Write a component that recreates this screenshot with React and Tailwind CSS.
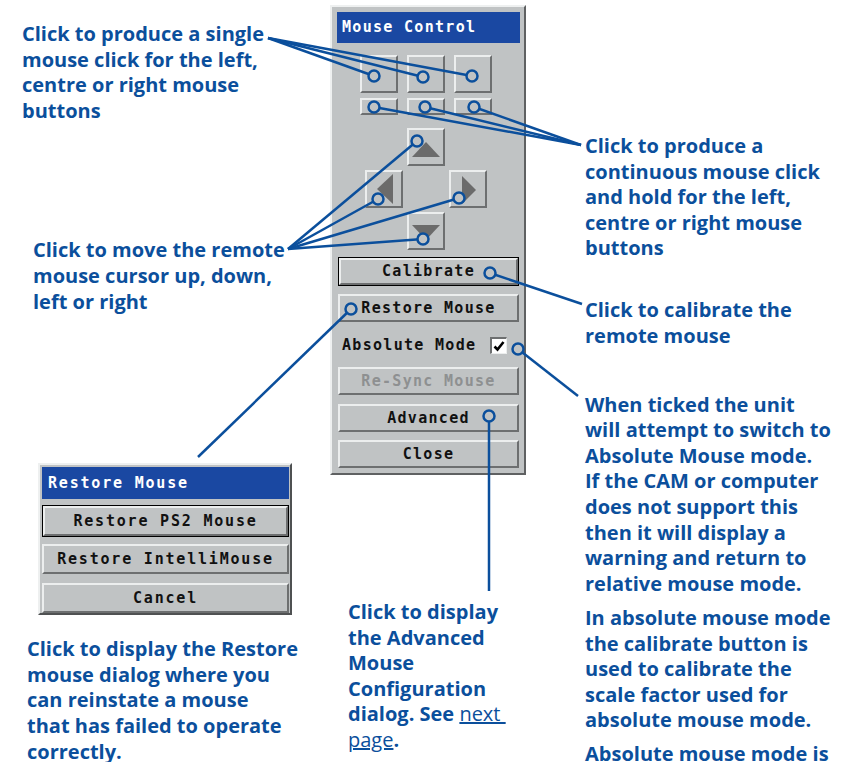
import React from "react";

const mono = "font-['DejaVu_Sans_Mono',monospace] font-bold";

function Btn({ children, className = "", focused, disabled }) {
  const face = (
    <div className="h-full border-2 border-t-[#eceeee] border-l-[#eceeee] border-b-[#6d6f70] border-r-[#6d6f70] bg-[#c0c3c4] flex items-center justify-center">
      <span className={disabled ? "text-[#8e9091]" : "text-[#111]"}>{children}</span>
    </div>
  );
  if (focused) {
    return <div className={`border border-black ${className}`}>{face}</div>;
  }
  return <div className={className}>{face}</div>;
}

function Square({ className = "", children }) {
  return (
    <div className={`border-2 border-t-[#eceeee] border-l-[#eceeee] border-b-[#6d6f70] border-r-[#6d6f70] bg-[#c0c3c4] flex items-center justify-center ${className}`}>
      {children}
    </div>
  );
}

function MousePanel() {
  return (
    <div className={`w-[196px] mt-[5px] border-2 border-t-[#eef0f0] border-l-[#eef0f0] border-b-[#5f6162] border-r-[#5f6162] bg-[#c0c3c4] pl-[5px] pr-[4px] pt-[5px] pb-[5px] flex flex-col text-[15px] tracking-[1.3px] ${mono}`}>
      {/* title */}
      <div className="h-[31px] bg-[#1a48a2] text-white flex items-center pl-[5px]">Mouse Control</div>

      {/* single click buttons */}
      <div className="mt-[12px] ml-[23px] flex gap-[9px]">
        <Square className="w-[38px] h-[38px]" />
        <Square className="w-[38px] h-[38px]" />
        <Square className="w-[38px] h-[38px]" />
      </div>
      {/* hold buttons */}
      <div className="mt-[5px] ml-[23px] flex gap-[9px]">
        <Square className="w-[38px] h-[17px]" />
        <Square className="w-[38px] h-[17px]" />
        <Square className="w-[38px] h-[17px]" />
      </div>

      {/* arrows */}
      <div className="mt-[13px] ml-[28px] grid grid-cols-[38px_38px_38px] grid-rows-[38px_38px_38px] gap-[4px]">
        <div />
        <Square>
          <svg width="30" height="30" viewBox="0 0 30 30">
            <polygon points="15,10 29,25 1,25" fill="#6b6b6b" />
          </svg>
        </Square>
        <div />
        <Square>
          <svg width="30" height="32" viewBox="0 0 30 32">
            <polygon points="8,16 24,1 24,31" fill="#6b6b6b" />
          </svg>
        </Square>
        <div />
        <Square>
          <svg width="30" height="32" viewBox="0 0 30 32">
            <polygon points="9,3 9,31 23,17" fill="#6b6b6b" />
          </svg>
        </Square>
        <div />
        <Square>
          <svg width="30" height="30" viewBox="0 0 30 30">
            <polygon points="1,9 29,9 15,24" fill="#6b6b6b" />
          </svg>
        </Square>
        <div />
      </div>

      <Btn focused className="mt-[7px] mx-[1px] h-[29px]">Calibrate</Btn>
      <Btn className="mt-[8px] mx-[1px] h-[28px]">Restore Mouse</Btn>

      <div className="mt-[9px] h-[28px] flex items-center pl-[5px] text-[#111]">
        <span>Absolute Mode</span>
        <div className="ml-auto mr-[13px] w-[17px] h-[17px] bg-white border-t-2 border-l-2 border-t-[#6d6f70] border-l-[#6d6f70] border-b border-r border-b-[#eceeee] border-r-[#eceeee] flex items-center justify-center">
          <svg width="12" height="12" viewBox="0 0 12 12">
            <path d="M1.5 6.5 L4.5 9.5 L10.5 2" fill="none" stroke="#000" strokeWidth="2.6" />
          </svg>
        </div>
      </div>

      <Btn disabled className="mt-[8px] mx-[1px] h-[28px]">Re-Sync Mouse</Btn>
      <Btn className="mt-[9px] mx-[1px] h-[28px]">Advanced</Btn>
      <Btn className="mt-[8px] mx-[1px] h-[28px]">Close</Btn>
    </div>
  );
}

function RestoreDialog() {
  return (
    <div className={`ml-[38px] mt-[149px] w-[254px] h-[155px] border-2 border-t-[#eef0f0] border-l-[#eef0f0] border-b-[#4f5152] border-r-[#4f5152] bg-[#c0c3c4] pl-[2px] pr-[1px] pt-[2px] flex flex-col text-[15px] tracking-[1.8px] ${mono}`}>
      <div className="h-[32px] bg-[#1a48a2] text-white flex items-center pl-[6px]">Restore Mouse</div>
      <Btn focused className="mt-[6px] h-[32px]">Restore PS2 Mouse</Btn>
      <Btn className="mt-[7px] h-[30px]">Restore IntelliMouse</Btn>
      <Btn className="mt-[9px] h-[30px]">Cancel</Btn>
    </div>
  );
}

const note = "text-[20px] leading-[25.6px] font-bold whitespace-nowrap";

function Callouts() {
  const c = "#0b4f9c";
  const line = (x1, y1, x2, y2, k) => (
    <line key={k} x1={x1} y1={y1} x2={x2} y2={y2} stroke={c} strokeWidth="2.5" />
  );
  const dot = (x, y, k) => (
    <circle key={k} cx={x} cy={y} r="5.5" fill="#c0c3c4" stroke={c} strokeWidth="2.5" />
  );
  return (
    <svg className="absolute inset-0 pointer-events-none" width="845" height="762" viewBox="0 0 845 762">
      {line(268, 38, 374, 76, "a1")}
      {line(268, 38, 423, 77, "a2")}
      {line(268, 38, 472, 76, "a3")}
      {line(581, 145, 374, 107, "b1")}
      {line(581, 145, 425, 107, "b2")}
      {line(581, 145, 474, 107, "b3")}
      {line(288, 249, 417, 141, "c1")}
      {line(288, 249, 378, 199, "c2")}
      {line(288, 249, 459, 198, "c3")}
      {line(288, 249, 423, 239, "c4")}
      {line(490, 273, 582, 304, "d")}
      {line(351, 309, 198, 457, "e")}
      {line(518, 349, 578, 396, "f")}
      {line(489, 416, 489, 591, "g")}
      {dot(374, 76, "p1")}
      {dot(423, 77, "p2")}
      {dot(472, 76, "p3")}
      {dot(374, 107, "p4")}
      {dot(425, 107, "p5")}
      {dot(474, 107, "p6")}
      {dot(417, 141, "p7")}
      {dot(378, 199, "p8")}
      {dot(459, 198, "p9")}
      {dot(423, 239, "p10")}
      {dot(490, 273, "p11")}
      {dot(351, 309, "p12")}
      {dot(518, 349, "p13")}
      {dot(489, 416, "p14")}
    </svg>
  );
}

export default function App() {
  return (
    <div className="relative w-[845px] h-[762px] bg-white overflow-hidden flex font-['Open_Sans',sans-serif] text-[#0b4f9c]">
      {/* left column */}
      <div className="w-[330px] shrink-0 flex flex-col">
        <p className={`${note} mt-[21px] ml-[22px]`}>
          Click to produce a single<br />mouse click for the left,<br />centre or right mouse<br />buttons
        </p>
        <p className={`${note} mt-[114px] ml-[33px]`}>
          Click to move the remote<br />mouse cursor up, down,<br />left or right
        </p>
        <RestoreDialog />
        <p className={`${note} mt-[21px] ml-[27px]`}>
          Click to display the Restore<br />mouse dialog where you<br />can reinstate a mouse<br />that has failed to operate<br />correctly.
        </p>
      </div>

      {/* middle column */}
      <div className="w-[230px] shrink-0 flex flex-col">
        <MousePanel />
        <p className={`${note} mt-[124px] ml-[18px]`}>
          Click to display<br />the Advanced<br />Mouse<br />Configuration<br />dialog. See{" "}
          <span className="font-normal underline">next&nbsp;</span>
          <br />
          <span className="font-normal underline">page</span>.
        </p>
      </div>

      {/* right column */}
      <div className="flex-1 flex flex-col pl-[25px]">
        <p className={`${note} mt-[133px]`}>
          Click to produce a<br />continuous mouse click<br />and hold for the left,<br />centre or right mouse<br />buttons
        </p>
        <p className={`${note} mt-[36px]`}>
          Click to calibrate the<br />remote mouse
        </p>
        <p className={`${note} mt-[43.5px]`}>
          When ticked the unit<br />will attempt to switch to<br />Absolute Mouse mode.<br />If the CAM or computer<br />does not support this<br />then it will display a<br />warning and return to<br />relative mouse mode.
        </p>
        <p className={`${note} mt-[8.5px]`}>
          In absolute mouse mode<br />the calibrate button is<br />used to calibrate the<br />scale factor used for<br />absolute mouse mode.
        </p>
        <p className={`${note} mt-[8px]`}>Absolute mouse mode is</p>
      </div>

      <Callouts />
    </div>
  );
}
